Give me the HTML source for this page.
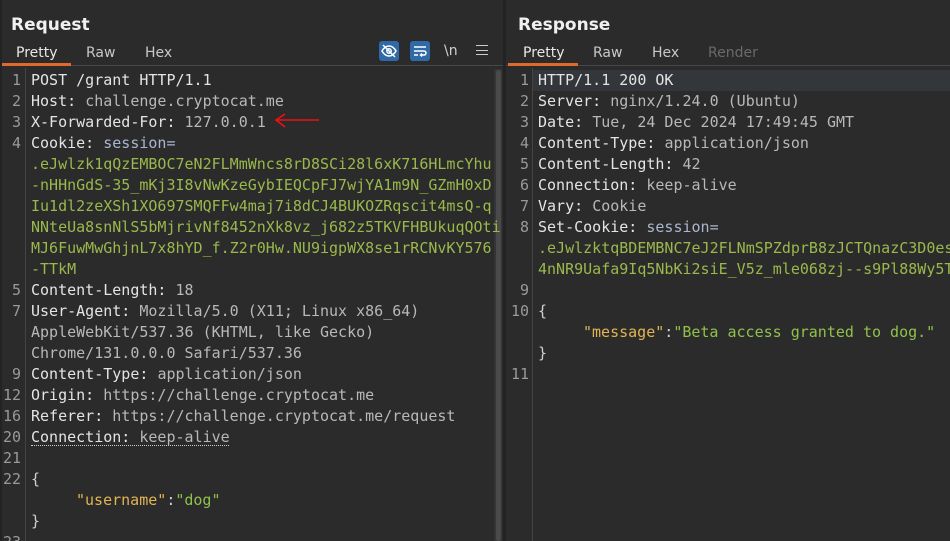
<!DOCTYPE html>
<html><head><style>
*{margin:0;padding:0;box-sizing:border-box}
html,body{width:950px;height:541px;overflow:hidden}
body{background:#2b2b2b;position:relative;font-family:"DejaVu Sans Mono","Liberation Mono",monospace;}
.h{position:absolute;top:15px;font:bold 17px "DejaVu Sans","Liberation Sans",sans-serif;color:#f0f0f0}
.tab{position:absolute;top:45px;font:14px "DejaVu Sans","Liberation Sans",sans-serif;color:#c8c8c8}
.ul{position:absolute;top:63px;height:3px;background:#e06a2e}
.line{position:absolute;top:65px;height:1px;background:#474747}
.r{position:absolute;height:21px;line-height:21px;font-size:15px;white-space:pre;color:#e4e4e4}
.n{position:absolute;height:21px;line-height:21px;font-size:15px;color:#9a9a9a;text-align:right}
.v{color:#b8b8b8}.s{color:#aab6cf}.g{color:#9ab84c}.y{color:#e3b452}.q{color:#d0d0d0}.gr{color:#8fc14b}
.ic{position:absolute;top:41px;width:20px;height:20px;background:#2f6aa7;border-radius:3px}
</style></head><body>
<div style="position:absolute;left:503px;top:0;width:3px;height:541px;background:#232323"></div>
<div style="position:absolute;left:0;top:0;width:2px;height:541px;background:#232323"></div>
<div class="h" style="left:11px">Request</div>
<div class="h" style="left:518px">Response</div>
<div class="tab" style="left:16px;color:#e8e8e8">Pretty</div>
<div class="tab" style="left:86px">Raw</div>
<div class="tab" style="left:145px">Hex</div>
<div class="tab" style="left:523px;color:#e8e8e8">Pretty</div>
<div class="tab" style="left:593px">Raw</div>
<div class="tab" style="left:652px">Hex</div>
<div class="tab" style="left:708px;color:#6a6a6a">Render</div>
<div class="line" style="left:2px;width:501px"></div>
<div class="line" style="left:506px;width:444px"></div>
<div class="ul" style="left:2px;width:69px"></div>
<div class="ul" style="left:508px;width:70px"></div>
<div class="ic" style="left:379px"><svg width="20" height="20" viewBox="0 0 20 20" fill="none" stroke="#fff" stroke-width="1.5"><path d="M3 10c2-3.5 4.5-5 7-5s5 1.5 7 5c-2 3.5-4.5 5-7 5s-5-1.5-7-5z"/><circle cx="10" cy="10" r="2.2"/><path d="M4 4l12 12"/></svg></div>
<div class="ic" style="left:410px"><svg width="20" height="20" viewBox="0 0 20 20" fill="none" stroke="#fff" stroke-width="1.5"><path d="M4 6h12M4 10h10a2 2 0 0 1 0 4h-3M12 12.5l-1.5 1.5 1.5 1.5M4 14h4"/></svg></div>
<div class="tab" style="left:444px;top:43px;color:#cfcfcf">\n</div>
<div style="position:absolute;left:476px;top:45px;width:12px;height:10px;border-top:1.5px solid #ccc;border-bottom:1.5px solid #ccc"></div>
<div style="position:absolute;left:476px;top:49.5px;width:12px;height:1.5px;background:#ccc"></div>
<div style="position:absolute;left:25px;top:68px;width:1px;height:473px;background:#444"></div>
<div style="position:absolute;left:532px;top:68px;width:1px;height:473px;background:#444"></div>
<div style="position:absolute;left:494px;top:69px;width:8px;height:472px;background:#353535"></div>
<div style="position:absolute;left:496px;top:70px;width:5px;height:471px;background:#4a4a4a;border-radius:3px"></div>
<div style="position:absolute;left:533px;top:70px;width:417px;height:21px;background:#33363b"></div>

<div class="n" style="left:0;width:21px;top:70px">1</div>
<div class="n" style="left:0;width:21px;top:91px">2</div>
<div class="n" style="left:0;width:21px;top:112px">3</div>
<div class="n" style="left:0;width:21px;top:133px">4</div>
<div class="n" style="left:0;width:21px;top:280px">5</div>
<div class="n" style="left:0;width:21px;top:301px">7</div>
<div class="n" style="left:0;width:21px;top:364px">9</div>
<div class="n" style="left:0;width:21px;top:385px">12</div>
<div class="n" style="left:0;width:21px;top:406px">16</div>
<div class="n" style="left:0;width:21px;top:427px">20</div>
<div class="n" style="left:0;width:21px;top:448px">21</div>
<div class="n" style="left:0;width:21px;top:469px">22</div>
<div class="n" style="left:0;width:21px;top:532px">23</div>

<div class="r" style="left:31px;top:70px">POST /grant HTTP/1.1</div>
<div class="r" style="left:31px;top:91px">Host: <span class="v">challenge.cryptocat.me</span></div>
<div class="r" style="left:31px;top:112px">X-Forwarded-For: <span class="v">127.0.0.1</span></div>
<svg style="position:absolute;left:273px;top:111px" width="48" height="20"><path d="M46 9H4M12 3L3 9l9 7" stroke="#e11" stroke-width="1.6" fill="none"/></svg>
<div class="r" style="left:31px;top:133px">Cookie: <span class="s">session=</span></div>
<div class="r g" style="left:31px;top:154px">.eJwlzk1qQzEMBOC7eN2FLMmWncs8rD8SCi28l6xK716HLmcYhu</div>
<div class="r g" style="left:31px;top:175px">-nHHnGdS-35_mKj3I8vNwKzeGybIEQCpFJ7wjYA1m9N_GZmH0xD</div>
<div class="r g" style="left:31px;top:196px">Iu1dl2zeXSh1XO697SMQFFw4maj7i8dCJ4BUKOZRqscit4msQ-q</div>
<div class="r g" style="left:31px;top:217px">NNteUa8snNlS5bMjrivNf8452nXk8vz_j682z5TKVFHBUkuqQOti</div>
<div class="r g" style="left:31px;top:238px">MJ6FuwMwGhjnL7x8hYD_f.Z2r0Hw.NU9igpWX8se1rRCNvKY576</div>
<div class="r g" style="left:31px;top:259px">-TTkM</div>
<div class="r" style="left:31px;top:280px">Content-Length: <span class="v">18</span></div>
<div class="r" style="left:31px;top:301px">User-Agent: <span class="v">Mozilla/5.0 (X11; Linux x86_64)</span></div>
<div class="r v" style="left:31px;top:322px">AppleWebKit/537.36 (KHTML, like Gecko)</div>
<div class="r v" style="left:31px;top:343px">Chrome/131.0.0.0 Safari/537.36</div>
<div class="r" style="left:31px;top:364px">Content-Type: <span class="v">application/json</span></div>
<div class="r" style="left:31px;top:385px">Origin: <span class="v">https://challenge.cryptocat.me</span></div>
<div class="r" style="left:31px;top:406px">Referer: <span class="v">https://challenge.cryptocat.me/request</span></div>
<div class="r" style="left:31px;top:427px">Connection: <span class="v">keep-alive</span></div>
<div style="position:absolute;left:31px;top:445px;width:198px;border-top:1px dotted #ccc"></div>
<div class="r q" style="left:31px;top:469px">{</div>
<div class="r" style="left:76px;top:490px"><span class="y">"username"</span><span class="q">:</span><span class="gr">"dog"</span></div>
<div class="r q" style="left:31px;top:511px">}</div>

<div class="n" style="left:507px;width:22px;top:70px">1</div>
<div class="n" style="left:507px;width:22px;top:91px">2</div>
<div class="n" style="left:507px;width:22px;top:112px">3</div>
<div class="n" style="left:507px;width:22px;top:133px">4</div>
<div class="n" style="left:507px;width:22px;top:154px">5</div>
<div class="n" style="left:507px;width:22px;top:175px">6</div>
<div class="n" style="left:507px;width:22px;top:196px">7</div>
<div class="n" style="left:507px;width:22px;top:217px">8</div>
<div class="n" style="left:507px;width:22px;top:280px">9</div>
<div class="n" style="left:507px;width:22px;top:301px">10</div>
<div class="n" style="left:507px;width:22px;top:364px">11</div>
<div class="r" style="left:538px;top:70px">HTTP/1.1 200 OK</div>
<div class="r" style="left:538px;top:91px">Server: <span class="v">nginx/1.24.0 (Ubuntu)</span></div>
<div class="r" style="left:538px;top:112px">Date: <span class="v">Tue, 24 Dec 2024 17:49:45 GMT</span></div>
<div class="r" style="left:538px;top:133px">Content-Type: <span class="v">application/json</span></div>
<div class="r" style="left:538px;top:154px">Content-Length: <span class="v">42</span></div>
<div class="r" style="left:538px;top:175px">Connection: <span class="v">keep-alive</span></div>
<div class="r" style="left:538px;top:196px">Vary: <span class="v">Cookie</span></div>
<div class="r" style="left:538px;top:217px">Set-Cookie: <span class="s">session=</span></div>
<div class="r g" style="left:538px;top:238px">.eJwlzktqBDEMBNC7eJ2FLNmSPZdprB8zJCTQnazC3D0es</div>
<div class="r g" style="left:538px;top:259px">4nNR9Uafa9Iq5NbKi2siE_V5z_mle068zj--s9Pl88Wy5T</div>
<div class="r q" style="left:538px;top:301px">{</div>
<div class="r" style="left:583px;top:322px"><span class="y">"message"</span><span class="q">:</span><span class="gr">"Beta access granted to dog."</span></div>
<div class="r q" style="left:538px;top:343px">}</div>
</body></html>
